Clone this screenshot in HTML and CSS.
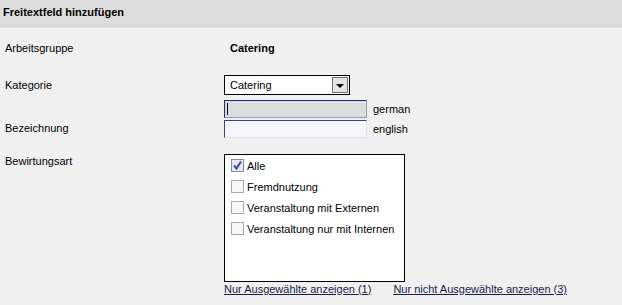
FILE: index.html
```html
<!DOCTYPE html>
<html lang="de">
<head>
    <meta charset="UTF-8">
    <title>Freitextfeld hinzufügen</title>
    <link rel="stylesheet" href="styles.css">
</head>
<body>
    <div class="panel-head">Freitextfeld hinzufügen</div>
    <div class="form">
        <div class="row row-group">
            <div class="label">Arbeitsgruppe</div>
            <div class="value">Catering</div>
        </div>
        <div class="row row-cat">
            <div class="label">Kategorie</div>
            <div class="select">
                <span class="select-text">Catering</span>
                <span class="select-btn"><span class="tri"></span></span>
            </div>
        </div>
        <div class="row row-lang">
            <div class="label"></div>
            <div class="input input-active"><span class="caret"></span></div>
            <span class="lang">german</span>
        </div>
        <div class="row row-lang2">
            <div class="label">Bezeichnung</div>
            <div class="input"></div>
            <span class="lang">english</span>
        </div>
        <div class="row row-list">
            <div class="label">Bewirtungsart</div>
            <div class="listbox">
                <div class="item">
                    <span class="box checked">
                        <svg width="11" height="11" viewBox="0 0 11 11"><path d="M2 5.5 L4.5 8.5 L9 1.5" fill="none" stroke="#3a4fa8" stroke-width="2"/></svg>
                    </span>
                    Alle
                </div>
                <div class="item"><span class="box"></span>Fremdnutzung</div>
                <div class="item"><span class="box"></span>Veranstaltung mit Externen</div>
                <div class="item"><span class="box"></span>Veranstaltung nur mit Internen</div>
            </div>
        </div>
        <div class="row row-links">
            <div class="label"></div>
            <a href="#" class="link">Nur Ausgewählte anzeigen (1)</a>
            <a href="#" class="link link-2">Nur nicht Ausgewählte anzeigen (3)</a>
        </div>
    </div>
</body>
</html>
```

FILE: styles.css
```css
body {
    margin: 0;
    background: #f0f0f0;
    font-family: "Liberation Sans", Arial, sans-serif;
    font-size: 11px;
    color: #000;
}
.panel-head {
    height: 28px;
    line-height: 25px;
    padding-left: 3px;
    background: #dcdcdc;
    border-bottom: 1px solid #fafafa;
    font-weight: bold;
}
.form {
    padding-left: 5px;
}
.row {
    display: flex;
    align-items: center;
}
.label {
    width: 219px;
    flex-shrink: 0;
}
.row-group {
    margin-top: 11px;
    height: 16px;
}
.value {
    padding-left: 6px;
    font-weight: bold;
}
.row-cat {
    margin-top: 19px;
}
.row-cat .label {
    margin-top: -1px;
}
.select {
    width: 124px;
    height: 18px;
    border: 1px solid #000;
    background: #fff;
    display: flex;
    align-items: center;
    justify-content: space-between;
}
.select-text {
    padding-left: 5px;
}
.select-btn {
    width: 14px;
    height: 14px;
    margin-right: 1px;
    border: 1px solid #6f6f6f;
    background: #e4e4e4;
    display: flex;
    align-items: center;
    justify-content: center;
}
.tri {
    width: 0;
    height: 0;
    border-left: 4px solid transparent;
    border-right: 4px solid transparent;
    border-top: 4px solid #000;
    margin-top: 1px;
}
.row-lang {
    margin-top: 5px;
}
.row-lang2 {
    margin-top: 2px;
}
.row-lang2 .label {
    margin-top: -2px;
}
.input {
    width: 141px;
    height: 16px;
    background: #f5f6fa;
    border: 1px solid #e2e3e8;
    border-top-color: #3a4470;
    border-left-color: #3a4470;
    display: flex;
    align-items: center;
}
.input-active {
    background: #dcdcdc;
    border: 1px solid #8c98b4;
    border-top-color: #1a2d6e;
    border-left-color: #1a2d6e;
}
.caret {
    width: 1px;
    height: 12px;
    margin-left: 2px;
    background: #000;
}
.lang {
    margin-left: 6px;
}
.row-list {
    margin-top: 16px;
    align-items: flex-start;
}
.row-list .label {
    line-height: 14px;
}
.listbox {
    width: 179px;
    height: 126px;
    background: #fff;
    border: 1px solid #000;
}
.item {
    display: flex;
    align-items: center;
    height: 21px;
    padding-left: 6px;
}
.box {
    width: 11px;
    height: 11px;
    border: 1px solid #a9a9a9;
    background: #f6f6f6;
    margin-right: 3px;
    display: flex;
    align-items: center;
    justify-content: center;
}
.box.checked {
    background: #e6e8ee;
    border-color: #8a8a9a;
}
.row-links {
    margin-top: 0;
    height: 13px;
}
.link {
    color: #1a1a4a;
    text-decoration: underline;
}
.link-2 {
    margin-left: 22px;
}
```
